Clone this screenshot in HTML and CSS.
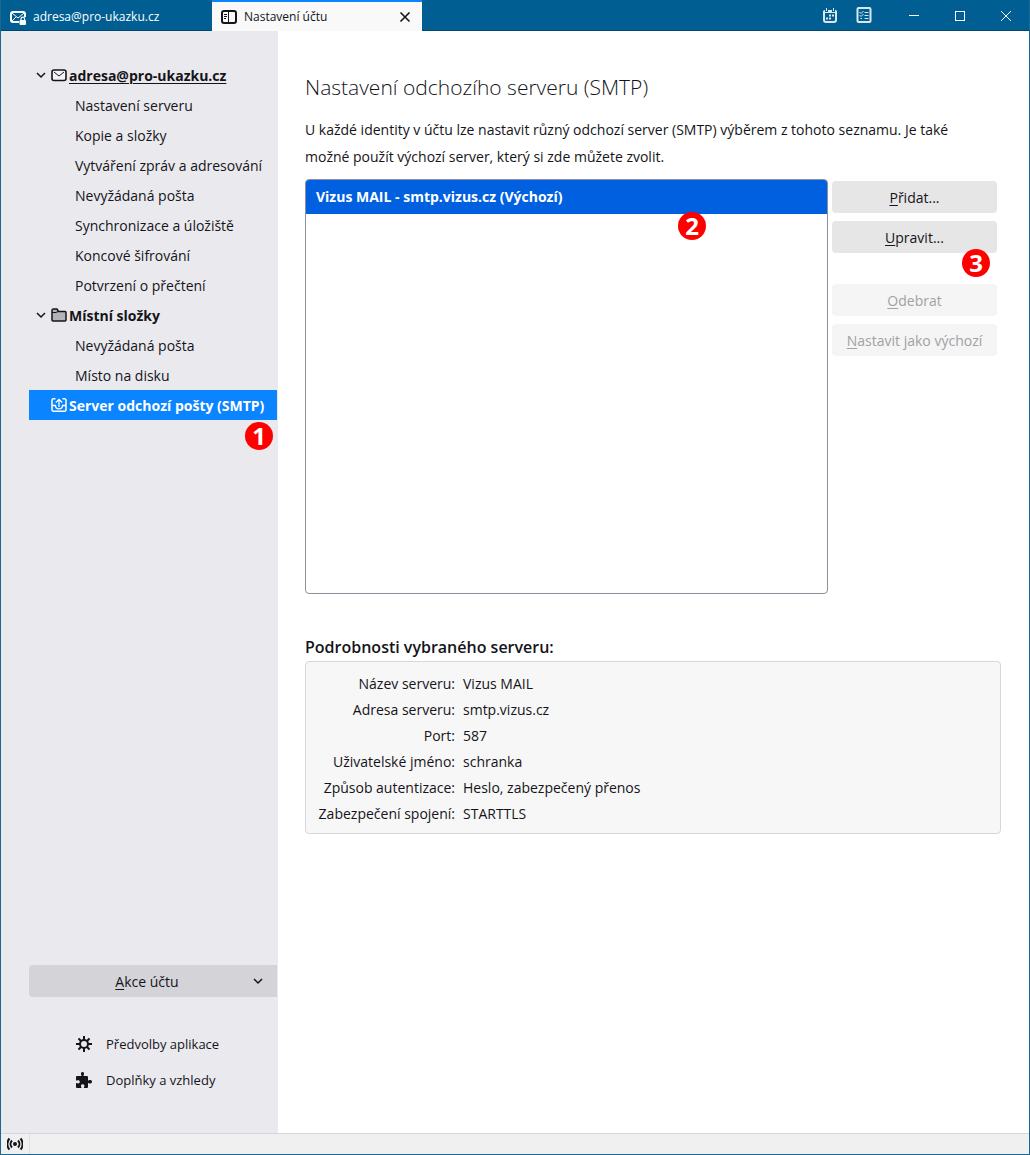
FILE: index.html
```
<!DOCTYPE html>
<html lang="cs">
<head>
    <meta charset="UTF-8">
    <meta name="viewport" content="width=device-width, initial-scale=1">
    <title>Nastavení účtu</title>
    <link rel="stylesheet" href="styles.css">
</head>
<body>
<div class="window">

    <header class="titlebar">
        <div class="tabs">
            <button class="tab">
                <svg class="icon" viewBox="0 0 16 16" fill="none" stroke="currentColor" stroke-width="2">
                    <path d="M9 13H3a2 2 0 0 1-2-2V5a2 2 0 0 1 2-2h10a2 2 0 0 1 2 2v3"/>
                    <path d="M2 4l6 5 6-5M2 12l4-4" stroke-width="1"/>
                    <rect x="9.500" y="11" width="6.500" height="5" rx="1" fill="currentColor" stroke="none"/>
                    <path d="M11 11.500V10a1.800 1.800 0 0 1 3.600 0v1.500" stroke-width="1.200"/>
                </svg>
                <span>adresa@pro-ukazku.cz</span>
            </button>
            <div class="tab active">
                <svg class="icon" viewBox="0 0 16 16" fill="none" stroke="currentColor">
                    <rect x="1" y="2" width="14" height="12" rx="2" stroke-width="2"/>
                    <path d="M7.500 2v12M3 5.500h3M3 7.500h3M3 9.500h2" stroke-width="1"/>
                </svg>
                <span>Nastavení účtu</span>
                <button class="close" aria-label="Zavřít panel">
                    <svg viewBox="0 0 12 12" fill="none" stroke="currentColor" stroke-width="1.600"><path d="M1.500 1.500l9 9M10.500 1.500l-9 9"/></svg>
                </button>
            </div>
        </div>
        <div class="tools">
            <button aria-label="Kalendář">
                <svg class="icon" viewBox="0 0 16 16" fill="none" stroke="currentColor">
                    <path d="M2 5.500V13a2 2 0 0 0 2 2h8a2 2 0 0 0 2-2V5.500" stroke-width="2"/>
                    <path d="M1 6V4.500A1.500 1.500 0 0 1 2.500 3H3v2h3V3h4v2h3V3h.5A1.500 1.500 0 0 1 15 4.500V6z" fill="currentColor" stroke="none"/>
                    <path d="M4.500 1v3M11.500 1v3" stroke-width="1"/>
                    <path d="M7 8.500h2M10 8.500h2M4 11.500h2M7 11.500h2" stroke-width="2"/>
                </svg>
            </button>
            <button aria-label="Úkoly">
                <svg class="icon" viewBox="0 0 16 16" fill="none" stroke="currentColor">
                    <rect x="1.500" y="1" width="13" height="14" rx="1" stroke-width="2"/>
                    <path d="M8.500 5.500h4M8.500 8.500h4M8.500 11.500h4M3.500 5l1.500 1.500L7.500 4M3.500 8l1.500 1.500L7.500 7M4.500 11.500H6"/>
                </svg>
            </button>
        </div>
        <div class="controls">
            <button aria-label="Minimalizovat"><svg viewBox="0 0 10 10" stroke="currentColor"><path d="M0 4.500h10"/></svg></button>
            <button aria-label="Maximalizovat"><svg viewBox="0 0 10 10" fill="none" stroke="currentColor"><rect x=".5" y=".5" width="9" height="9"/></svg></button>
            <button aria-label="Zavřít"><svg viewBox="0 0 10 10" stroke="currentColor"><path d="M0 0l10 10M10 0L0 10"/></svg></button>
        </div>
    </header>

    <div class="main">
        <nav class="sidebar">
            <ul class="tree">
                <li>
                    <a class="account default" href="#">
                        <svg class="chevron" viewBox="0 0 12 12"><path d="M2 4l4 4 4-4"/></svg>
                        <svg class="icon" viewBox="0 0 16 16" fill="none" stroke="currentColor">
                            <rect x="1" y="3" width="14" height="10.500" rx="2" fill="#f4f4f6" stroke-width="1.600"/>
                            <path d="M3 5l5 4 5-4"/>
                        </svg>
                        <span>adresa@pro-ukazku.cz</span>
                    </a>
                    <ul>
                        <li><a href="#">Nastavení serveru</a></li>
                        <li><a href="#">Kopie a složky</a></li>
                        <li><a href="#">Vytváření zpráv a adresování</a></li>
                        <li><a href="#">Nevyžádaná pošta</a></li>
                        <li><a href="#">Synchronizace a úložiště</a></li>
                        <li><a href="#">Koncové šifrování</a></li>
                        <li><a href="#">Potvrzení o přečtení</a></li>
                    </ul>
                </li>
                <li>
                    <a class="account" href="#">
                        <svg class="chevron" viewBox="0 0 12 12"><path d="M2 4l4 4 4-4"/></svg>
                        <svg class="icon" viewBox="0 0 16 16" stroke="currentColor" stroke-width="1.500">
                            <path d="M1 13V3.500A1.500 1.500 0 0 1 2.500 2H6l1.500 2.500H14a1 1 0 0 1 1 1V13a1 1 0 0 1-1 1H2a1 1 0 0 1-1-1z" fill="#b4b4b7"/>
                            <path d="M1 5.500h4l2-1" fill="none" stroke-width="1"/>
                        </svg>
                        <span>Místní složky</span>
                    </a>
                    <ul>
                        <li><a href="#">Nevyžádaná pošta</a></li>
                        <li><a href="#">Místo na disku</a></li>
                    </ul>
                </li>
                <li class="smtp">
                    <a class="account selected" href="#">
                        <svg class="icon" viewBox="0 0 16 16" fill="none" stroke="currentColor" stroke-width="1.500">
                            <path d="M4.500 1.800H2.500A1.500 1.500 0 0 0 1 3.300v9.400a1.500 1.500 0 0 0 1.500 1.500h11a1.500 1.500 0 0 0 1.500-1.500V3.300a1.500 1.500 0 0 0-1.500-1.500h-2"/>
                            <path d="M8 10V2.500M4.800 5.500L8 2.300l3.200 3.200M1 8.500h3.500c0 2 1 3.300 3.500 3.300s3.500-1.300 3.500-3.300H15" stroke-width="1.300"/>
                        </svg>
                        <span>Server odchozí pošty (SMTP)</span>
                    </a>
                    <span class="badge badge1">1</span>
                </li>
            </ul>

            <button class="actions">
                <span><u>A</u>kce účtu</span>
                <svg class="chevron" viewBox="0 0 12 12"><path d="M2 4l4 4 4-4"/></svg>
            </button>

            <ul class="links">
                <li><a href="#">
                    <svg class="icon" viewBox="0 0 16 16" fill="none" stroke="currentColor" stroke-width="2">
                        <circle cx="8" cy="8" r="4"/>
                        <path d="M8 0v4M8 12v4M0 8h4M12 8h4M2.500 2.500l2.700 2.700M10.800 10.800l2.700 2.700M13.500 2.500l-2.700 2.700M5.200 10.800l-2.700 2.700"/>
                    </svg>
                    <span>Předvolby aplikace</span>
                </a></li>
                <li><a href="#">
                    <svg class="icon" viewBox="0 0 16 16" fill="currentColor">
                        <path d="M0 5a1 1 0 0 1 1-1h4c.6 0 .6-.6.300-1C4.500 1.500 5 0 6.500 0S8.500 1.500 7.700 3c-.3.500-.2 1 .3 1h3a1 1 0 0 1 1 1v3c0 .6.500.7 1 .3 1.200-.9 3-.3 3 1.400s-1.800 2.300-3 1.500c-.5-.4-1-.2-1 .3V15a1 1 0 0 1-1 1H8.500c-.6 0-.8-.5-.4-1 .8-1.300.2-2.700-1.400-2.700s-2.200 1.400-1.400 2.700c.3.500.2 1-.4 1H1a1 1 0 0 1-1-1v-3.500c0-.5.500-.7 1-.4 1.400.8 2.800.2 2.800-1.300S2.400 7.700 1 8.500c-.5.300-1 .1-1-.5z"/>
                    </svg>
                    <span>Doplňky a vzhledy</span>
                </a></li>
            </ul>
        </nav>

        <main class="content">
            <h1>Nastavení odchozího serveru (SMTP)</h1>
            <p>U každé identity v účtu lze nastavit různý odchozí server (SMTP) výběrem z tohoto seznamu. Je také možné použít výchozí server, který si zde můžete zvolit.</p>

            <div class="servers">
                <ul class="list" role="listbox" aria-label="Odchozí servery">
                    <li role="option" aria-selected="true">Vizus MAIL - smtp.vizus.cz (Výchozí)
                        <span class="badge badge2">2</span>
                    </li>
                </ul>
                <div class="buttons">
                    <button><u>P</u>řidat...</button>
                    <div class="edit">
                        <button><u>U</u>pravit...</button>
                        <span class="badge badge3">3</span>
                    </div>
                    <button disabled><u>O</u>debrat</button>
                    <button disabled><u>N</u>astavit jako výchozí</button>
                </div>
            </div>

            <h2>Podrobnosti vybraného serveru:</h2>
            <div class="details">
                <table>
                    <tr><th scope="row">Název serveru:</th><td>Vizus MAIL</td></tr>
                    <tr><th scope="row">Adresa serveru:</th><td>smtp.vizus.cz</td></tr>
                    <tr><th scope="row">Port:</th><td>587</td></tr>
                    <tr><th scope="row">Uživatelské jméno:</th><td>schranka</td></tr>
                    <tr><th scope="row">Způsob autentizace:</th><td>Heslo, zabezpečený přenos</td></tr>
                    <tr><th scope="row">Zabezpečení spojení:</th><td>STARTTLS</td></tr>
                </table>
            </div>
        </main>
    </div>

    <footer class="statusbar">
        <button aria-label="Stav připojení">
            <svg class="icon" viewBox="0 0 16 16" fill="none" stroke="currentColor" stroke-width="2">
                <circle cx="8" cy="8" r="2" fill="currentColor" stroke="none"/>
                <path d="M5 4.500a5 5 0 0 0 0 7M11 4.500a5 5 0 0 1 0 7M2.500 2.500a8 8 0 0 0 0 11M13.500 2.500a8 8 0 0 1 0 11"/>
            </svg>
        </button>
    </footer>

</div>
</body>
</html>
```
FILE: styles.css
```
* {
    box-sizing: border-box;
    margin: 0; padding: 0;
}
body {
    font-family: "Open Sans", "Noto Sans", sans-serif;
    font-size: 14px;
    color: #15141a;
    background: #fff;
}
button {
    font: inherit;
    color: inherit;
    border: 0;
    background: none;
}
ul {
    list-style: none;
}
a {
    color: inherit;
    text-decoration: none;
}
svg {
    display: block;
    flex: none;
}
u {
    text-underline-offset: 2px;
}
.icon {
    width: 16px;
    height: 16px;
}
.chevron {
    width: 12px;
    height: 12px;
    fill: none;
    stroke: currentColor;
    stroke-width: 1.5;
}
.window {
    display: flex;
    flex-direction: column;
    min-height: 100vh;
    border: 1px solid #1b6793;
    border-top: 0;
}

/* title bar */
.titlebar {
    display: flex;
    height: 31px;
    color: #fff;
    background: #005e93;
    border-bottom: 1px solid #00466e;
}
.tabs {
    display: flex;
    flex: 1;
    height: 31px;
    font-size: 12px;
}
.tab {
    display: flex;
    align-items: center;
    gap: 7px;
    width: 211px;
    padding: 2px 10px 0 9px;
}
.tab.active {
    width: 210px;
    padding-top: 0;
    color: #15141a;
    background: #f9f9fa;
    border-top: 2px solid #0a84ff;
}
.close {
    margin-left: auto;
    padding: 1px;
}
.close svg {
    width: 12px;
    height: 12px;
}
.tools {
    display: flex;
    align-items: center;
    gap: 18px;
    padding-right: 19px;
    color: #d9e7ef;
}
.controls {
    display: flex;
}
.controls button {
    display: flex;
    align-items: center;
    justify-content: center;
    width: 46px;
    padding-top: 1px;
}
.controls svg {
    width: 10px;
    height: 10px;
}

.main {
    display: flex;
    flex: 1;
}

/* account tree */
.sidebar {
    display: flex;
    flex-direction: column;
    flex: none;
    width: 277px;
    padding: 29px 1px 35px 28px;
    background: #eaeaee;
}
.tree {
    flex: 1;
}
.tree a {
    display: flex;
    align-items: center;
    height: 30px;
    padding-left: 46px;
    white-space: nowrap;
}
.tree .account {
    gap: 2px;
    padding-left: 6px;
    font-weight: bold;
}
.tree .chevron {
    margin-right: 2px;
}
.tree .default {
    text-decoration: underline;
    text-underline-offset: 2px;
}
.tree .selected {
    padding-left: 22px;
    color: #fff;
    background: #0a84ff;
}
.smtp {
    position: relative;
}
.actions {
    display: flex;
    align-items: center;
    height: 32px;
    padding: 0 13px;
    background: #d4d3d8;
    border-radius: 4px 0 0 4px;
}
.actions span {
    flex: 1;
}
.links {
    margin-top: 29px;
    font-size: 13px;
}
.links a {
    display: flex;
    align-items: center;
    gap: 14px;
    height: 36px;
    padding-left: 47px;
}

/* numbered markers */
.badge {
    position: absolute;
    width: 28px;
    height: 28px;
    line-height: 27px;
    font-size: 24px;
    font-weight: bold;
    text-align: center;
    color: #fff;
    background: #f00;
    border-radius: 50%;
}
.badge1 {
    top: 32px;
    right: 4px;
}
.badge2 {
    top: 32px;
    right: 121px;
}
.badge3 {
    top: 28px;
    right: 7px;
}

/* content */
.content {
    flex: 1;
    padding: 41px 28px 28px 27px;
}
h1 {
    font-size: 21px;
    font-weight: 300;
    line-height: 30px;
    margin-bottom: 14px;
}
p {
    line-height: 27px;
    margin-bottom: 9px;
    padding-right: 28px;
}
.servers {
    display: flex;
    gap: 4px;
    margin-bottom: 40px;
    padding-right: 4px;
}
.list {
    flex: 1;
    height: 415px;
    border: 1px solid #8f8f9d;
    border-radius: 4px;
}
.list li {
    position: relative;
    padding-left: 10px;
    line-height: 34px;
    font-weight: bold;
    color: #fff;
    background: #0060df;
    border-radius: 3px 3px 0 0;
}
.list .badge {
    line-height: 27px;
}
.buttons {
    display: flex;
    flex-direction: column;
    gap: 8px;
    width: 165px;
    padding-top: 2px;
}
.buttons button {
    width: 100%;
    height: 32px;
    background: #e6e6e6;
    border-radius: 4px;
}
.buttons button:disabled {
    color: #a1a1a3;
    background: #f5f5f5;
}
.edit {
    position: relative;
    margin-bottom: 23px;
}
h2 {
    font-size: 16px;
    font-weight: 600;
    line-height: 27px;
}
.details {
    padding: 8px 9px 7px;
    background: #f7f7f7;
    border: 1px solid #d7d7db;
    border-radius: 4px;
}
.details table {
    border-collapse: collapse;
}
.details th {
    width: 148px;
    padding-right: 8px;
    font-weight: normal;
    text-align: right;
}
.details tr {
    height: 26px;
}

.statusbar {
    height: 21px;
    background: #f0f0f0;
    border-top: 1px solid #d7d7db;
}
.statusbar button {
    height: 20px;
    padding: 0 6px;
    border-right: 1px solid #e0e0e2;
}
```
